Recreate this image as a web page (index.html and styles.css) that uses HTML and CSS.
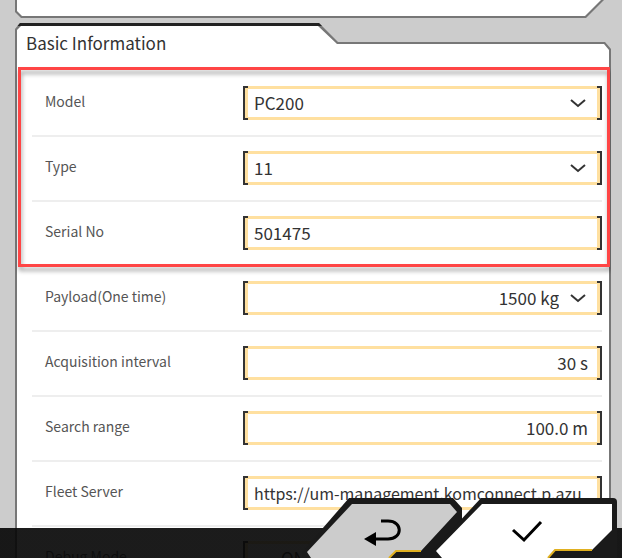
FILE: index.html
```html
<!DOCTYPE html>
<html lang="en">
<head>
  <meta charset="UTF-8" />
  <meta name="viewport" content="width=device-width, initial-scale=1" />
  <title>Basic Information</title>
  <link rel="stylesheet" href="styles.css">
</head>
<body>
  <main class="screen">
    <section class="panel panel-previous"></section>

    <form class="panel panel-basic" id="basicForm">
      <h2>Basic Information</h2>

      <div class="rows">
        <!-- Machine identification -->
        <div class="highlight">
          <div class="row">
            <label for="model">Model</label>
            <div class="field">
              <select id="model"><option>PC200</option></select>
              <svg class="chevron" viewBox="0 0 16 10"><path d="M1 2l7 6 7-6" /></svg>
            </div>
          </div>
          <div class="row">
            <label for="type">Type</label>
            <div class="field">
              <select id="type"><option>11</option></select>
              <svg class="chevron" viewBox="0 0 16 10"><path d="M1 2l7 6 7-6" /></svg>
            </div>
          </div>
          <div class="row">
            <label for="serial">Serial No</label>
            <div class="field">
              <input type="text" id="serial" value="501475">
            </div>
          </div>
        </div>

        <div class="row">
          <label for="payload">Payload(One time)</label>
          <div class="field number">
            <select id="payload"><option>1500 kg</option></select>
            <svg class="chevron" viewBox="0 0 16 10"><path d="M1 2l7 6 7-6" /></svg>
          </div>
        </div>
        <div class="row">
          <label for="interval">Acquisition interval</label>
          <div class="field number">
            <input type="text" id="interval" value="30 s">
          </div>
        </div>
        <div class="row">
          <label for="range">Search range</label>
          <div class="field number">
            <input type="text" id="range" value="100.0 m">
          </div>
        </div>
        <div class="row">
          <label for="server">Fleet Server</label>
          <div class="field url">
            <input type="text" id="server" value="https://um-management.komconnect.p.azu">
          </div>
        </div>
        <div class="row">
          <label for="debug">Debug Mode</label>
          <div class="field toggle">
            <select id="debug"><option>ON</option></select>
          </div>
        </div>
      </div>
    </form>
  </main>

  <footer class="action-bar">
    <button type="button" class="action back" aria-label="Back">
      <svg viewBox="0 0 160 60">
        <path class="edge" d="M0 54L47 0H151L160 10V60H0z" />
        <path class="face" d="M9 60L5 54 50 6H148L155 14 119 53H94L87 60z" />
        <path class="accent" d="M87 60L94 53H119" />
        <path class="icon" d="M79 23H86C101 23 101 41 86 41H73" />
        <path class="arrow" d="M62 41L74 34V48z" />
      </svg>
    </button>
    <button type="submit" form="basicForm" class="action ok" aria-label="OK">
      <svg viewBox="0 0 186 60">
        <path class="edge" d="M0 54L50 0H182Q186 0 186 4V60H0z" />
        <path class="face" d="M11 60L5 53 51 6H181V32L161 52H124L117 60z" />
        <path class="accent" d="M117 60L124 52H161" />
        <path class="icon" d="M82 32L93 42 110 24" />
      </svg>
    </button>
  </footer>
</body>
</html>
```

FILE: styles.css
```css
* {
  box-sizing: border-box;
}

body {
  margin: 0;
  height: 100vh;
  overflow: hidden;
  background-color: #ccc;
  color: #333;
  font-family: 'Noto Sans CJK JP', 'Noto Sans', sans-serif;
}

.screen {
  height: 100%;
  padding: 0 10px 0 15px;
  overflow: hidden;
}

/* Panels: the outer shape is the line colour, ::before is the white face */
.panel {
  position: relative;
  isolation: isolate;
  background-color: #777;
}

.panel::before {
  content: '';
  position: absolute;
  inset: 0 2px;
  z-index: -1;
  background-color: #fff;
}

.panel-previous {
  height: 18px;
  margin-bottom: 5px;
  clip-path: polygon(0 0, calc(100% - 8px) 0, calc(100% - 26px) 100%, 6px 100%, 0 12px);
}

.panel-previous::before {
  inset: 0 2px 2px;
  clip-path: polygon(0 0, calc(100% - 9px) 0, calc(100% - 25px) 100%, 5px 100%, 0 11px);
}

.panel-basic {
  background-image: linear-gradient(#222 3px, transparent 3px);
  clip-path: polygon(0 6px, 5px 0, 304px 0, 323px 19px, calc(100% - 7px) 19px, calc(100% - 1px) 26px, calc(100% - 1px) 100%, 0 100%);
}

.panel-basic::before {
  inset: 3px 3px 0 2px;
  clip-path: polygon(0 4px, 4px 0, 301px 0, 320px 18px, calc(100% - 5px) 18px, 100% 24px, 100% 100%, 0 100%);
}

h2 {
  margin: 0;
  padding: 8px 11px 0;
  height: 49px;
  font-size: 17px;
  font-weight: 400;
  line-height: 24px;
}

.rows {
  padding: 0 10px 0 17px;
}

.row {
  display: grid;
  grid-template-columns: 198px 1fr;
  align-items: center;
  height: 65px;
  padding: 0 0 2px 13px;
  border-bottom: 2px solid #eee;
}

.row label {
  padding-bottom: 4px;
  color: #555;
  font-size: 14px;
  line-height: 20px;
}

/* Red frame around the first rows */
.highlight {
  position: relative;
}

.highlight::after {
  content: '';
  position: absolute;
  inset: -5px -8px 0 -14px;
  z-index: 1;
  border: 3px solid #ff4545;
  filter: drop-shadow(1px 4px 2px rgba(0, 0, 0, 0.35));
  pointer-events: none;
}

.highlight .row:last-child {
  border-bottom-color: transparent;
}

/* Yellow box with black brackets at both ends */
.field {
  display: grid;
  align-items: center;
  height: 34px;
  background:
    linear-gradient(#333, #333) left / 2px 100%,
    linear-gradient(#333, #333) right / 2px 100%,
    linear-gradient(#333, #333) left top / 5px 2px,
    linear-gradient(#333, #333) left bottom / 5px 2px,
    linear-gradient(#333, #333) right top / 5px 2px,
    linear-gradient(#333, #333) right bottom / 5px 2px,
    linear-gradient(#fff, #fff) center / calc(100% - 10px) calc(100% - 6px),
    #ffe0a0;
  background-repeat: no-repeat;
}

.field input,
.field select {
  grid-area: 1 / 1;
  width: 100%;
  min-width: 0;
  height: 34px;
  margin: 0;
  padding: 0 7px 0 11px;
  border: none;
  outline: none;
  appearance: none;
  background: transparent;
  color: #333;
  font-family: inherit;
  font-size: 17px;
  line-height: 34px;
}

.field.number input {
  padding-right: 14px;
  text-align: right;
}

.field.number select {
  padding-right: 43px;
  text-align: right;
  text-align-last: right;
}

.field.url input {
  font-size: 16px;
}

.field.toggle select {
  padding-left: 38px;
}

.chevron {
  grid-area: 1 / 1;
  justify-self: end;
  width: 16px;
  height: 10px;
  margin-right: 16px;
  fill: none;
  stroke: #333;
  stroke-width: 2;
  pointer-events: none;
}

/* Bottom bar, the buttons stick out above it */
.action-bar {
  position: fixed;
  left: 0;
  right: 0;
  bottom: 0;
  z-index: 2;
  display: flex;
  justify-content: flex-end;
  padding-right: 5px;
  background: linear-gradient(rgba(8, 8, 8, 0.92), rgba(8, 8, 8, 0.92)) bottom / 100% 30px no-repeat;
}

.action {
  height: 60px;
  padding: 0;
  border: none;
  background: none;
  cursor: pointer;
}

.action svg {
  display: block;
  width: 100%;
  height: 100%;
}

.action.back {
  width: 160px;
}

.action.ok {
  width: 186px;
  margin-left: -31px;
}

.edge {
  fill: #1a1a1a;
}

.face {
  fill: #ccc;
}

.ok .face {
  fill: #fff;
}

.accent {
  fill: none;
  stroke: #e0b020;
  stroke-width: 2;
}

.icon {
  fill: none;
  stroke: #000;
  stroke-width: 3;
}

.arrow {
  fill: #000;
}
```
